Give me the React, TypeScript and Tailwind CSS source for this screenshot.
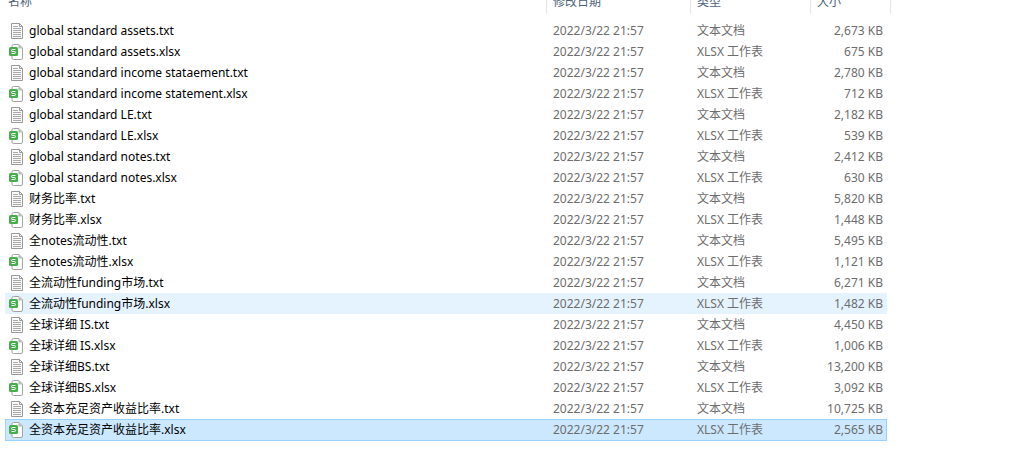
import React from "react";
import clsx from "clsx";

type FileRow = {
    name: string;
    size: string;
    state?: "hover" | "selected";
};

const modified = "2022/3/22 21:57";

const files: FileRow[] = [
    {name: "global standard assets.txt", size: "2,673 KB"},
    {name: "global standard assets.xlsx", size: "675 KB"},
    {name: "global standard income stataement.txt", size: "2,780 KB"},
    {name: "global standard income statement.xlsx", size: "712 KB"},
    {name: "global standard LE.txt", size: "2,182 KB"},
    {name: "global standard LE.xlsx", size: "539 KB"},
    {name: "global standard notes.txt", size: "2,412 KB"},
    {name: "global standard notes.xlsx", size: "630 KB"},
    {name: "财务比率.txt", size: "5,820 KB"},
    {name: "财务比率.xlsx", size: "1,448 KB"},
    {name: "全notes流动性.txt", size: "5,495 KB"},
    {name: "全notes流动性.xlsx", size: "1,121 KB"},
    {name: "全流动性funding市场.txt", size: "6,271 KB"},
    {name: "全流动性funding市场.xlsx", size: "1,482 KB", state: "hover"},
    {name: "全球详细 IS.txt", size: "4,450 KB"},
    {name: "全球详细 IS.xlsx", size: "1,006 KB"},
    {name: "全球详细BS.txt", size: "13,200 KB"},
    {name: "全球详细BS.xlsx", size: "3,092 KB"},
    {name: "全资本充足资产收益比率.txt", size: "10,725 KB"},
    {name: "全资本充足资产收益比率.xlsx", size: "2,565 KB", state: "selected"},
];

function TextIcon() {
    return (
        <svg viewBox="0 0 16 16" className="size-4 shrink-0" fill="none" aria-hidden="true">
            <path d="M2.5 .5H10.5L13.5 3.5V15.5H2.5Z" fill="#fafafa" stroke="#999"/>
            <path d="M10.5 .5V3.5H13.5" stroke="#999"/>
            <path d="M4 3.5H9M4 5.5H12M4 7.5H12M4 9.5H12M4 11.5H12M4 13.5H12" stroke="#aaa"/>
        </svg>
    );
}

function SheetIcon() {
    return (
        <svg viewBox="0 0 16 16" className="size-4 shrink-0" fill="none" aria-hidden="true">
            <path d="M4.5 .5H10L13.5 4V14Q13.5 15.5 12 15.5H4.5Q3 15.5 3 14V2Q3 .5 4.5 .5Z" fill="#fff" stroke="#a3a3a3"/>
            <path d="M9.5 .5L13.5 4.5H9.5Z" fill="#b8b8b8"/>
            <rect x="0" y="3" width="9" height="9" rx="1.5" fill="#45b04b"/>
            <path d="M6.5 5.5H3.3Q2.7 5.5 2.7 6.1V6.9Q2.7 7.5 3.3 7.5H5.7Q6.3 7.5 6.3 8.1V8.9Q6.3 9.5 5.7 9.5H2.5" stroke="#fff"/>
        </svg>
    );
}

export default function App() {
    return (
        <main className="overflow-hidden bg-white pr-[120px] pl-[5px] font-['Noto_Sans','Noto_Sans_CJK_SC',sans-serif] text-[12px] leading-4 text-[#6d6d6d]">
            <table className="-mt-2.5 w-full table-fixed border-separate border-spacing-0">
                <colgroup>
                    <col/>
                    <col className="w-[144px]"/>
                    <col className="w-[120px]"/>
                    <col className="w-[76px]"/>
                    <col className="w-[4px]"/>
                </colgroup>
                <thead className="text-left text-[#4c607a]">
                    <tr className="h-[24px] *:border-r *:border-[#e5e5e5] *:p-0 *:font-normal">
                        <th className="pl-[3px]!">名称</th>
                        <th className="pl-[6px]!">修改日期</th>
                        <th className="pl-[6px]!">类型</th>
                        <th className="pl-[6px]!" colSpan={2}>大小</th>
                    </tr>
                </thead>
                <tbody className="before:block before:h-[6px]">
                    {files.map(({name, size, state}) => {
                        const isText = name.endsWith(".txt");
                        return (
                            <tr
                                key={name}
                                className={clsx(
                                    "*:p-0",
                                    state === "selected" ? "h-[22px]" : "h-[21px]",
                                    state === "hover" && "*:not-last:bg-[#e5f3ff]",
                                    state === "selected" && "*:not-last:border-y *:not-last:border-[#99d1ff] *:not-last:bg-[#cce8ff] *:first:border-l *:nth-4:border-r"
                                )}
                            >
                                <td>
                                    <div className={clsx("flex items-center gap-1 text-black", state === "selected" ? "pl-[3px]" : "pl-[4px]")}>
                                        {isText ? <TextIcon/> : <SheetIcon/>}
                                        <span className="whitespace-nowrap">{name}</span>
                                    </div>
                                </td>
                                <td className="pl-[6px]!">{modified}</td>
                                <td className="pl-[6px]!">{isText ? "文本文档" : "XLSX 工作表"}</td>
                                <td className={clsx("text-right whitespace-nowrap", state === "selected" ? "pr-[3px]!" : "pr-[4px]!")}>{size}</td>
                                <td></td>
                            </tr>
                        );
                    })}
                </tbody>
            </table>
        </main>
    );
}
